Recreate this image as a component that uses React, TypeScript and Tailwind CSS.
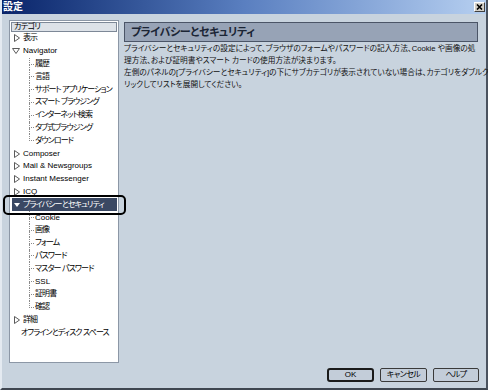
import React from 'react';

type Node = {
  label: string;
  level: 0 | 1;
  arrow?: 'closed' | 'open' | 'selected';
  last?: boolean;
  selected?: boolean;
};

const tree: Node[] = [
  { label: '表示', level: 0, arrow: 'closed' },
  { label: 'Navigator', level: 0, arrow: 'open' },
  { label: '履歴', level: 1 },
  { label: '言語', level: 1 },
  { label: 'サポート アプリケーション', level: 1 },
  { label: 'スマート ブラウジング', level: 1 },
  { label: 'インターネット検索', level: 1 },
  { label: 'タブ式ブラウジング', level: 1 },
  { label: 'ダウンロード', level: 1, last: true },
  { label: 'Composer', level: 0, arrow: 'closed' },
  { label: 'Mail & Newsgroups', level: 0, arrow: 'closed' },
  { label: 'Instant Messenger', level: 0, arrow: 'closed' },
  { label: 'ICQ', level: 0, arrow: 'closed' },
  { label: 'プライバシーとセキュリティ', level: 0, arrow: 'selected', selected: true },
  { label: 'Cookie', level: 1 },
  { label: '画像', level: 1 },
  { label: 'フォーム', level: 1 },
  { label: 'パスワード', level: 1 },
  { label: 'マスター パスワード', level: 1 },
  { label: 'SSL', level: 1 },
  { label: '証明書', level: 1 },
  { label: '確認', level: 1, last: true },
  { label: '詳細', level: 0, arrow: 'closed' },
  { label: 'オフラインとディスク スペース', level: 0 },
];

const isAscii = (s: string) => /^[\x00-\x7f]*$/.test(s);

const Arrow = ({ kind }: { kind: Node['arrow'] }) => {
  if (kind === 'closed')
    return (
      <svg width="6" height="8" viewBox="0 0 6 8" className="shrink-0">
        <polygon points="0.5,0.5 5.5,4 0.5,7.5" fill="none" stroke="#5a5a5a" strokeWidth="1" />
      </svg>
    );
  if (kind === 'open')
    return (
      <svg width="8" height="6" viewBox="0 0 8 6" className="shrink-0">
        <polygon points="0.5,0.5 7.5,0.5 4,5.5" fill="none" stroke="#5a5a5a" strokeWidth="1" />
      </svg>
    );
  return (
    <svg width="6" height="4" viewBox="0 0 6 4" className="shrink-0">
      <polygon points="0,0 6,0 3,4" fill="#ffffff" />
    </svg>
  );
};

const Row = ({ node }: { node: Node }) => {
  const track = isAscii(node.label) ? '' : 'tracking-[-0.9px]';
  if (node.level === 1) {
    return (
      <div className="flex h-[12.8px] items-stretch">
        <span className="w-[17px] shrink-0" />
        <span className="flex w-[5px] shrink-0 flex-col">
          <span className="flex-1 border-b border-l border-dotted border-[#8a8a8a]" />
          <span className={`flex-1 ${node.last ? '' : 'border-l border-dotted border-[#8a8a8a]'}`} />
        </span>
        <span className={`flex items-center pl-px leading-none whitespace-nowrap ${track}`}>{node.label}</span>
      </div>
    );
  }
  return (
    <div
      className={`flex h-[12.8px] items-center whitespace-nowrap leading-none ${
        node.selected ? 'bg-[#3a4863] text-white' : ''
      }`}
    >
      <span className="flex w-[9px] shrink-0 justify-end pr-px">{node.arrow && <Arrow kind={node.arrow} />}</span>
      <span className={`${node.arrow ? 'pl-[2px]' : 'pl-0'} ${track}`}>{node.label}</span>
    </div>
  );
};

export default function App() {
  return (
    <div
      className="flex h-[390px] w-[488px] flex-col border-b-[2px] border-l-[2px] border-r-[2px] border-b-[#3f4650] border-l-[#e4eaf1] border-r-[#4a525e] bg-[#c8d3de] text-[8px] text-black [font-feature-settings:'palt']"
      style={{ fontFamily: '"Liberation Sans", "Noto Sans CJK JP", sans-serif' }}
    >
      {/* title bar */}
      <div className="flex h-[14px] shrink-0 items-center justify-between bg-linear-to-r from-[#0a246a] via-[#5a7fc0] to-[#b6cff0] pl-[1px] pr-[1px]">
        <span className="text-[10px] font-bold leading-none text-white">設定</span>
        <span className="flex h-[10px] w-[11px] items-center justify-center border border-b-[#404040] border-l-white border-r-[#404040] border-t-white bg-[#d4d0c8]">
          <svg width="7" height="6" viewBox="0 0 7 6">
            <path d="M1 0.5 L6 5.5 M6 0.5 L1 5.5" stroke="#000" strokeWidth="1.6" />
          </svg>
        </span>
      </div>

      <div className="flex min-h-0 flex-1">
        {/* category tree */}
        <div className="relative ml-[7px] mt-[6px] flex h-[343px] w-[110px] shrink-0 flex-col border border-[#8c97a6] bg-white p-px">
          <div className="flex h-[10px] items-center border border-[#7d8897] bg-[#dde2e8] pl-[2px] leading-none tracking-[-0.6px]">カテゴリ</div>
          <div className="flex flex-col pl-px">
            {tree.map((n) => (
              <Row key={n.label} node={n} />
            ))}
          </div>
          <div className="pointer-events-none absolute left-[-7px] top-[174px] h-[20px] w-[123px] rounded-[5px] border-2 border-black" />
        </div>

        {/* right pane */}
        <div className="ml-[5px] mr-[8px] mt-[8px] flex min-w-0 flex-1 flex-col">
          <div className="flex h-[20px] items-center border border-[#4b5567] bg-[#97a3b6] pl-[6px] text-[11px] font-bold leading-none tracking-[-0.4px] text-[#1b2535]">
            プライバシーとセキュリティ
          </div>
          <div className="mt-[1px] flex flex-col whitespace-nowrap text-[7.7px] leading-[12px] text-[#111]">
            <span>プライバシーとセキュリティの設定によって、ブラウザのフォームやパスワードの記入方法、Cookie や画像の処</span>
            <span>理方法、および証明書やスマート カードの使用方法が決まります。</span>
            <span>左側のパネルの[プライバシーとセキュリティ]の下にサブカテゴリが表示されていない場合は、カテゴリをダブルク</span>
            <span>リックしてリストを展開してください。</span>
          </div>
        </div>
      </div>

      {/* buttons */}
      <div className="flex h-[23px] shrink-0 items-start justify-end gap-[6px] pr-[7px] pt-[3px]">
        <button className="flex h-[14px] w-[47px] items-center justify-center rounded-[3px] border-2 border-[#1a1a1a] bg-[#c3cdd9] leading-none">OK</button>
        <button className="flex h-[14px] w-[47px] items-center justify-center rounded-[2px] border border-[#3a3a3a] bg-[#c3cdd9] leading-none tracking-[-0.6px]">キャンセル</button>
        <button className="flex h-[14px] w-[46px] items-center justify-center rounded-[2px] border border-[#3a3a3a] bg-[#c3cdd9] leading-none tracking-[-0.6px]">ヘルプ</button>
      </div>
    </div>
  );
}
